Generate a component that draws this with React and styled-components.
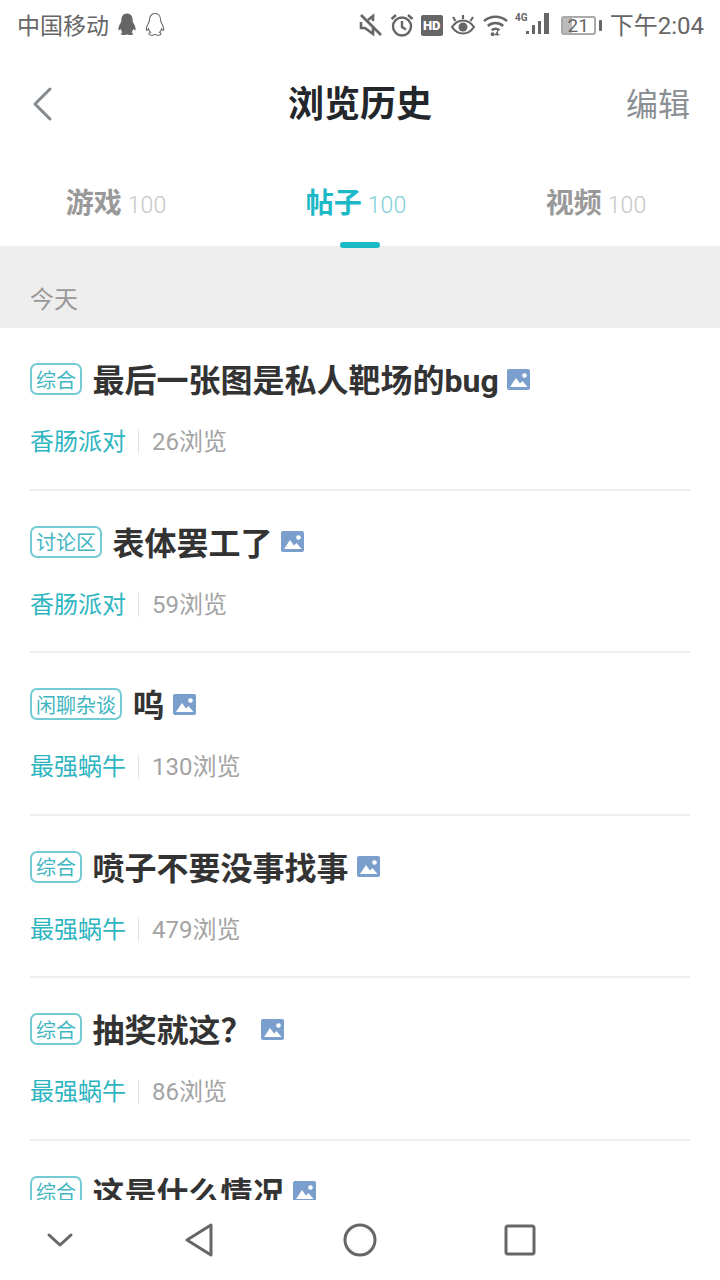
import React from "react";
import styled, { createGlobalStyle } from "styled-components";

const GlobalStyle = createGlobalStyle`
  html, body { margin: 0; padding: 0; background: #fff; }
  * { box-sizing: border-box; }
`;

const FONT = `Roboto, "Noto Sans CJK SC", "Noto Sans", sans-serif`;
const TEAL = "#1cb8c6";

const Page = styled.div`
  width: 720px;
  height: 1280px;
  display: flex;
  flex-direction: column;
  overflow: hidden;
  background: #fff;
  font-family: ${FONT};
`;

const StatusBar = styled.div`
  height: 50px;
  flex: none;
  padding: 0 16px 0 17px;
  display: flex;
  align-items: center;
  justify-content: space-between;
  color: #666;
`;

const StatusGroup = styled.div`
  display: flex;
  align-items: center;
  gap: ${(p) => p.$gap || 0}px;
`;

const Carrier = styled.span`
  font-size: 23px;
  padding-bottom: 2px;
`;

const Header = styled.div`
  height: 108px;
  flex: none;
  padding: 0 30px;
  display: grid;
  grid-template-columns: 1fr auto 1fr;
  align-items: center;
`;

const BackButton = styled.div`
  display: flex;
  align-items: center;
`;

const Title = styled.div`
  font-size: 36px;
  font-weight: 700;
  color: #23262b;
  padding-bottom: 6px;
`;

const EditLink = styled.div`
  font-size: 32px;
  color: #8a8f94;
  text-align: right;
  padding-bottom: 4px;
`;

const Tabs = styled.div`
  height: 88px;
  flex: none;
  display: grid;
  grid-template-columns: repeat(3, 240px);
`;

const Tab = styled.div`
  position: relative;
  display: flex;
  align-items: baseline;
  justify-content: center;
  gap: 6px;
  padding: 23px 8px 0 0;
  color: ${(p) => (p.$active ? TEAL : "#999")};
`;

const TabName = styled.span`
  font-size: 28px;
  font-weight: 700;
`;

const TabCount = styled.span`
  font-size: 23px;
  font-weight: 300;
  color: ${(p) => (p.$active ? "#7fd0d8" : "#c6c6c6")};
`;

const TabMark = styled.div`
  position: absolute;
  left: 100px;
  bottom: -2px;
  width: 40px;
  height: 6px;
  border-radius: 3px;
  background: ${TEAL};
  z-index: 1;
`;

const SectionLabel = styled.div`
  height: 82px;
  flex: none;
  padding: 40px 30px 0;
  background: #eee;
  color: #999;
  font-size: 24px;
  line-height: 28px;
`;

const List = styled.div`
  flex: 1;
  min-height: 0;
  overflow: hidden;
  padding: 0 30px;
`;

const Row = styled.div`
  height: 162.5px;
  padding-top: 33px;
  border-bottom: 2px solid #eee;
`;

const RowTitle = styled.div`
  height: 36px;
  display: flex;
  align-items: center;
`;

const Badge = styled.span`
  flex: none;
  height: 32px;
  padding: 0 4px;
  margin-right: 10.5px;
  display: flex;
  align-items: center;
  border: 2px solid #74cbd3;
  border-radius: 7px;
  color: #3fb6c1;
  font-size: 20px;
`;

const RowText = styled.span`
  font-size: 32px;
  font-weight: 700;
  color: #333;
  white-space: nowrap;
  padding-bottom: 2px;
`;

const ImageMark = styled.svg`
  flex: none;
  width: 23px;
  height: 21px;
  margin-left: 8.5px;
`;

const RowMeta = styled.div`
  margin-top: 31px;
  display: flex;
  align-items: center;
  font-size: 24px;
  line-height: 28px;
`;

const Forum = styled.span`
  color: #2cb5c1;
`;

const MetaRule = styled.span`
  width: 1px;
  height: 24px;
  margin: 0 13px 0 12px;
  background: #e4e4e4;
`;

const Views = styled.span`
  color: #a3a3a3;
`;

const NavBar = styled.div`
  height: 80px;
  flex: none;
  display: grid;
  grid-template-columns: 120px 160px 160px 160px;
  align-items: center;
  justify-items: center;
  background: #fff;
`;

const NavIcon = styled.svg`
  display: block;
  fill: none;
  stroke: ${(p) => p.$color || "#666"};
  stroke-width: 3;
  stroke-linecap: round;
  stroke-linejoin: round;
`;

const StatusIcon = styled.svg`
  display: block;
  flex: none;
`;

const BatteryBox = styled.div`
  width: 35px;
  height: 19px;
  border: 2px solid #aaa;
  border-radius: 3px;
  font-size: 19px;
  line-height: 15px;
  text-align: center;
  color: #666;
  background: linear-gradient(to right, #bbb 30%, transparent 30%);
`;

const BatteryCap = styled.div`
  width: 3px;
  height: 11px;
  margin-left: 3px;
  background: #666;
  border-radius: 1px;
`;

const HdBadge = styled.div`
  width: 22px;
  height: 21px;
  border-radius: 2px;
  background: #666;
  color: #fff;
  font-size: 13px;
  font-weight: 900;
  line-height: 21px;
  text-align: center;
`;

const ClockText = styled.span`
  margin-left: 1px;
  font-size: 24px;
  padding-bottom: 4px;
`;

const Penguin = ({ filled }) => (
  <StatusIcon width="20" height="24" viewBox="1 1 18 22.500">
    <path
      d="M10 1.500c-3.600 0-5.300 3-5.300 6.300 0 1-.2 1.700-.9 2.900-1.100 2-2.300 4.600-1.800 6.300.3.800 1.300-.2 1.900-1.200.3 1.400 1 2.500 1.900 3.300-1.100.5-1.700 1.200-1.400 1.900.4.800 3 .8 4.700.3.500-.1 1.300-.1 1.800 0 1.700.5 4.300.5 4.700-.3.300-.7-.3-1.400-1.400-1.900.9-.8 1.600-1.900 1.900-3.300.6 1 1.600 2 1.900 1.200.5-1.700-.7-4.300-1.800-6.300-.7-1.200-.9-1.900-.9-2.900C15.300 4.500 13.600 1.500 10 1.500z"
      fill={filled ? "#666" : "#fff"}
      stroke="#666"
      strokeWidth={filled ? 0 : 1}
    />
  </StatusIcon>
);

const PictureMark = () => (
  <ImageMark viewBox="0 0 23 21">
    <rect width="23" height="21" rx="2" fill="#7b9fcd" />
    <circle cx="17.500" cy="6.500" r="2.300" fill="#fff" />
    <path d="M3 18l6-9 4 5.500 2.500-2.500 5 6z" fill="#fff" />
  </ImageMark>
);

const rows = [
  { tag: "综合", title: "最后一张图是私人靶场的bug", forum: "香肠派对", views: 26 },
  { tag: "讨论区", title: "表体罢工了", forum: "香肠派对", views: 59 },
  { tag: "闲聊杂谈", title: "呜", forum: "最强蜗牛", views: 130 },
  { tag: "综合", title: "喷子不要没事找事", forum: "最强蜗牛", views: 479 },
  { tag: "综合", title: "抽奖就这？", forum: "最强蜗牛", views: 86 },
  { tag: "综合", title: "这是什么情况" },
];

const tabs = [
  { name: "游戏", count: 100 },
  { name: "帖子", count: 100, active: true },
  { name: "视频", count: 100 },
];

export default function App() {
  return (
    <Page>
      <GlobalStyle />
      <StatusBar>
        <StatusGroup $gap={8}>
          <Carrier>中国移动</Carrier>
          <Penguin filled />
          <Penguin />
        </StatusGroup>
        <StatusGroup $gap={7}>
          <StatusIcon width="24" height="24" viewBox="-2 0 24 24" fill="none" stroke="#666" strokeWidth="2.600">
            <path d="M0 2l20 20" />
            <path d="M0 9v6h4l8 6v-6M12 8V3L7 7" />
          </StatusIcon>
          <StatusIcon width="24" height="26" viewBox="0 0 24 26" fill="none" stroke="#666" strokeWidth="2.400">
            <circle cx="12" cy="14.500" r="9" />
            <path d="M12 9v6l4 2.500M1.500 7l4.500-4M22.500 7L18 3" />
          </StatusIcon>
          <HdBadge>HD</HdBadge>
          <StatusIcon width="26" height="26" viewBox="0 0 26 26" fill="none" stroke="#666" strokeWidth="2.200">
            <path d="M2 15c3-4.500 6.500-6.500 11-6.500S21 10.500 24 15c-3 4.500-6.500 6.500-11 6.500S5 19.500 2 15z" />
            <circle cx="13" cy="15" r="4.500" fill="#666" stroke="none" />
            <path d="M5.500 9L3 5M20.500 9L23 5M13 7V3" />
          </StatusIcon>
          <StatusIcon width="25" height="24" viewBox="0 0 26 24" fill="none" stroke="#666" strokeWidth="2.600">
            <path d="M1 8c7-6 17-6 24 0M5 13c4.500-4 11.500-4 16 0M9 17.500c2.500-2 5.500-2 8 0" />
            <circle cx="10" cy="21.500" r="2" fill="#666" stroke="none" />
            <path d="M15 23v-4l-2 3h4" strokeWidth="1.200" />
          </StatusIcon>
          <StatusIcon width="39" height="26" viewBox="0 0 39 26" fill="#666">
            <text x="0" y="9" fontSize="10" fontWeight="700" fontFamily="Roboto, sans-serif">4G</text>
            <rect x="11" y="19" width="3" height="3" />
            <rect x="17" y="13" width="3" height="9" />
            <rect x="23" y="9" width="3" height="13" />
            <rect x="29" y="1" width="5" height="21" />
          </StatusIcon>
          <StatusGroup>
            <BatteryBox>21</BatteryBox>
            <BatteryCap />
          </StatusGroup>
          <ClockText>下午2:04</ClockText>
        </StatusGroup>
      </StatusBar>
      <Header>
        <BackButton>
          <NavIcon $color="#84898f" width="28" height="36" viewBox="0 0 28 36">
            <path d="M20 3L5 18l15 15" />
          </NavIcon>
        </BackButton>
        <Title>浏览历史</Title>
        <EditLink>编辑</EditLink>
      </Header>
      <Tabs>
        {tabs.map((tab) => (
          <Tab key={tab.name} $active={tab.active}>
            <TabName>{tab.name}</TabName>
            <TabCount $active={tab.active}>{tab.count}</TabCount>
            {tab.active && <TabMark />}
          </Tab>
        ))}
      </Tabs>
      <SectionLabel>今天</SectionLabel>
      <List>
        {rows.map((row) => (
          <Row key={row.title}>
            <RowTitle>
              <Badge>{row.tag}</Badge>
              <RowText>{row.title}</RowText>
              <PictureMark />
            </RowTitle>
            {row.forum && (
              <RowMeta>
                <Forum>{row.forum}</Forum>
                <MetaRule />
                <Views>{row.views}浏览</Views>
              </RowMeta>
            )}
          </Row>
        ))}
      </List>
      <NavBar>
        <NavIcon width="28" height="16" viewBox="0 0 28 16">
          <path d="M3 3l11 10L25 3" />
        </NavIcon>
        <NavIcon width="32" height="36" viewBox="0 0 32 36">
          <path d="M27 3v30L3 18z" />
        </NavIcon>
        <NavIcon width="34" height="34" viewBox="0 0 34 34">
          <circle cx="17" cy="17" r="15" />
        </NavIcon>
        <NavIcon width="32" height="32" viewBox="0 0 32 32">
          <rect x="2" y="2" width="28" height="28" rx="2" />
        </NavIcon>
      </NavBar>
    </Page>
  );
}
